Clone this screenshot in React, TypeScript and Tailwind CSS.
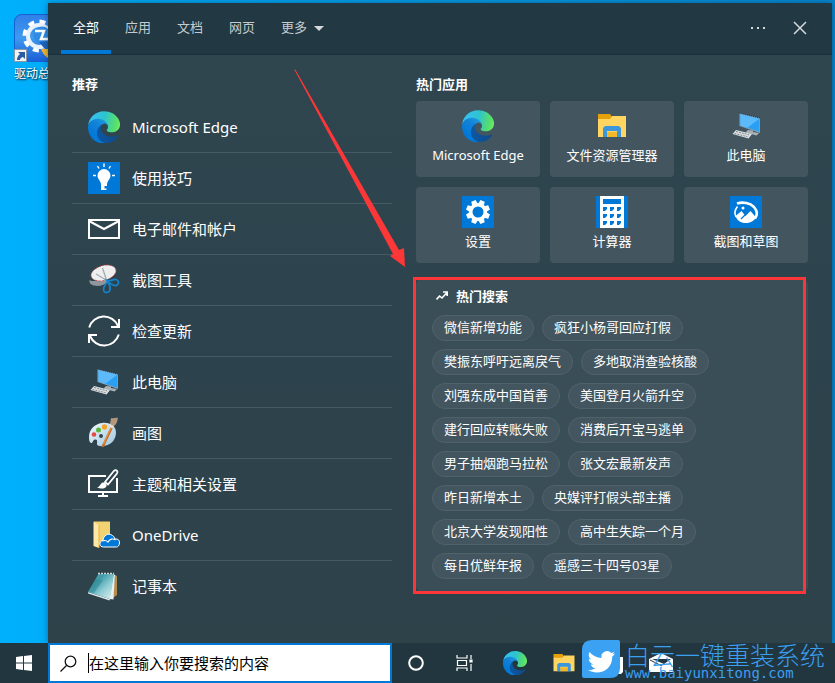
import { ReactNode } from 'react';

type IconProps = {
  className?: string;
};

type AppEntry = {
  label: string;
  icon: ReactNode;
};

function EdgeIcon({ className = 'w-8 h-8' }: IconProps) {
  return (
    <svg viewBox="0 0 256 256" className={className} aria-hidden="true">
      <defs>
        <linearGradient id="edge-a" x1="63" y1="177" x2="241" y2="177" gradientUnits="userSpaceOnUse">
          <stop offset="0" stopColor="#0c59a4" />
          <stop offset="1" stopColor="#114a8b" />
        </linearGradient>
        <linearGradient id="edge-b" x1="157" y1="92" x2="46" y2="213" gradientUnits="userSpaceOnUse">
          <stop offset="0" stopColor="#1b9de2" />
          <stop offset="0.4" stopColor="#1382d8" />
          <stop offset="1" stopColor="#0078d7" />
        </linearGradient>
        <linearGradient id="edge-c" x1="20" y1="60" x2="250" y2="110" gradientUnits="userSpaceOnUse">
          <stop offset="0" stopColor="#35c1f1" />
          <stop offset="0.45" stopColor="#2dc3cf" />
          <stop offset="0.9" stopColor="#5be063" />
          <stop offset="1" stopColor="#66eb6e" />
        </linearGradient>
      </defs>
      <path fill="url(#edge-a)" d="M235.7 195.5a93.7 93.7 0 0 1-10.6 4.7 101.9 101.9 0 0 1-35.9 6.4c-47.3 0-88.5-32.5-88.5-74.3a31.5 31.5 0 0 1 16.4-27.3c-42.8 1.8-53.8 46.4-53.8 72.5 0 74 68.1 81.4 82.8 81.4 7.9 0 19.8-2.3 27-4.6l1.3-.4a128.3 128.3 0 0 0 66.6-52.8 4 4 0 0 0-5.3-5.6Z" />
      <path fill="url(#edge-b)" d="M105.7 241.4A79.2 79.2 0 0 1 83 220.1a80.7 80.7 0 0 1 34.1-115.1c3.2-1.5 8.5-4.2 15.6-4.1a32.4 32.4 0 0 1 25.7 13 31.9 31.9 0 0 1 6.3 18.7c0-.2 24.5-79.6-80-79.6-43.9 0-84.7 41.7-84.7 78.2a130.2 130.2 0 0 0 12.1 56 128 128 0 0 0 156.4 67.1 75.5 75.5 0 0 1-62.8-12.9Z" />
      <path fill="url(#edge-c)" d="M152.3 148.9c-.8 1-3.3 2.5-3.3 5.7 0 2.6 1.7 5.1 4.8 7.3 14.4 10 41.6 8.7 41.7 8.7a59.6 59.6 0 0 0 30.3-8.3 61.4 61.4 0 0 0 30.4-52.9c.3-22.4-8-37.3-11.3-43.9C223.5 24.3 177.7 1 128 1A128 128 0 0 0 0 127.2C.5 90.7 36.8 61.2 80 61.2c3.5 0 23.5.3 42 10.1 16.3 8.6 24.9 19 30.8 29.2 6.2 10.7 7.3 24.1 7.3 29.5 0 5.3-2.7 13.3-7.8 18.9Z" />
    </svg>
  );
}

function TipsIcon() {
  return (
    <svg viewBox="0 0 32 32" className="w-8 h-8" aria-hidden="true">
      <path fill="#0078d7" d="M0 0h32v32H0z" />
      <path fill="#fff" d="M16 7a6.500 6.500 0 0 0-6.500 6.500c0 3.300 2.700 4.800 3.500 8.500v6h5.500v-1.500h-2V24H19v-2c.8-3.700 3.500-5.200 3.500-8.500A6.500 6.500 0 0 0 16 7Z" />
      <path stroke="#fff" strokeWidth="1.400" d="M16 1.500v3.500M9.500 4l1.500 2.500M22.500 4 21 6.500M5 13.500h3M24 13.500h3" />
    </svg>
  );
}

function MailOutlineIcon() {
  return (
    <svg viewBox="0 0 32 32" className="w-8 h-8" fill="none" stroke="#fff" strokeWidth="2" aria-hidden="true">
      <path d="M1 7h30v18H1z" />
      <path d="m1 8 15 8 15-8" />
    </svg>
  );
}

function SnippingIcon() {
  return (
    <svg viewBox="0 0 32 32" className="w-8 h-8" aria-hidden="true">
      <path fill="#8d979c" d="M1.500 16c3 2.500 10 0 17-1l.5 3c-3 4-9 4.500-13 3.500-3-.5-5-2.500-4.500-5.500Z" />
      <ellipse cx="15.500" cy="9" rx="12.800" ry="7.400" fill="#eeeeef" transform="rotate(-16 15.500 9)" />
      <ellipse cx="15.500" cy="9" rx="12.800" ry="7.400" fill="none" stroke="#cf4a4c" strokeWidth="0.800" strokeDasharray="2 1.500" transform="rotate(-16 15.500 9)" />
      <path stroke="#a4acb1" strokeWidth="1.300" fill="none" d="m8 10 11 6.500M14.500 4l4 12" />
      <g fill="none" stroke="#1683cd" strokeWidth="1.700">
        <path d="M19 16.500c3.500 1 6-1.500 9-1 3 .8 3.500 4 1 5.800-3 1.200-5-.8-8-2.800Z" />
        <path d="M19.500 18c-2.500 2.500-4.500 6-3.700 9 1 2.200 5 2 6-.5.800-2.500.2-5-1.300-7.500Z" />
      </g>
    </svg>
  );
}

function RefreshIcon() {
  return (
    <svg viewBox="0 0 32 32" className="w-8 h-8" fill="none" stroke="#fff" strokeWidth="2" aria-hidden="true">
      <path d="M1.200 12.500A15.300 15.300 0 0 1 30 11M30.800 19.500A15.300 15.300 0 0 1 2 21" />
      <path d="M31 4v8h-8M1 28v-8h8" />
    </svg>
  );
}

function ComputerIcon() {
  return (
    <svg viewBox="0 0 32 32" className="w-8 h-8" aria-hidden="true">
      <path fill="#7fa3ba" d="m9.500 3 20.500 5v15L9.500 16Z" />
      <path fill="#2aa0f4" d="m10.500 4.200 18.700 4.600v12.700l-18.700-6Z" />
      <path fill="#5cbafb" d="m10.500 4.200 18.700 4.600-11.700 9-7-2.300Z" />
      <path stroke="#1f2d35" strokeWidth="1" strokeDasharray="1 1" d="m9.500 3 20.500 5" />
      <path fill="#a8b1b7" d="m18 20 5 .5v1.500l6 1-2.500 2.500-11-3Z" />
      <path fill="#dcdfe1" d="m6 20 16 4-3.500 4.500L2.500 24Z" />
      <path stroke="#7f8990" strokeWidth="1" strokeDasharray="2 1" d="m6 21.500 13 3.300M4.500 23.500l13 3.200" />
    </svg>
  );
}

function PaintIcon() {
  return (
    <svg viewBox="0 0 32 32" className="w-8 h-8" aria-hidden="true">
      <defs>
        <linearGradient id="palette" x1="0" y1="0" x2="1" y2="1">
          <stop offset="0" stopColor="#f3f8fb" />
          <stop offset="1" stopColor="#9cc7e2" />
        </linearGradient>
      </defs>
      <path fill="url(#palette)" d="M14 6C6 7 1 13 1 20c0 3 .5 5.500 2 6 2 .5 1.500-3 4-3.500 3-.5 2 3 2 5 1 2 5 2 9 1 6-1.500 10-6.500 10-13S22 5 14 6Z" />
      <circle cx="6" cy="17.500" r="2.300" fill="#e54b45" />
      <circle cx="10.500" cy="13" r="2.500" fill="#5cb53b" />
      <circle cx="16.500" cy="10" r="2.700" fill="#f2a42c" />
      <circle cx="13" cy="19" r="2" fill="#314751" />
      <path stroke="#c9691e" strokeWidth="2.400" strokeLinecap="round" d="m24 10-9 19" />
      <path stroke="#ef9a44" strokeWidth="1" d="m23.500 10-8 17" />
      <path fill="#b3977c" d="M22 7 23 1c2 1 5-1 7 0-1 2 0 5-4 8Z" />
      <path fill="#dfdfdd" d="m22 7 4 2-1.500 2.500-3.500-2Z" />
    </svg>
  );
}

function ThemeIcon() {
  return (
    <svg viewBox="0 0 32 32" className="w-8 h-8" fill="none" stroke="#fff" strokeWidth="2" aria-hidden="true">
      <path d="M18 8H1v16h28V10M15 24v4M10 28h10" />
      <path d="M17 14 26 2.800c1-1 2.300-.8 3 0 .8.900.7 2-.1 2.900L20 16.500ZM17 14l3 2.500" strokeWidth="1.800" />
      <path fill="#fff" d="M9 19.200c3.500 0 3-4.200 6-4.700 2.500 0 4 2 3.500 3.700-1.500 3-6 3-9.500 1Z" stroke="none" />
    </svg>
  );
}

function OneDriveIcon() {
  return (
    <svg viewBox="0 0 32 32" className="w-8 h-8" aria-hidden="true">
      <path fill="#f3d272" d="M6 2.500h16v23H8Z" />
      <path fill="#ffe9a6" d="m5.500 2.500 5.500 4V29l-5.500-2Z" />
      <path fill="#e3b545" d="M10.500 6.500h1V29h-1Z" />
      <path fill="#0078d7" stroke="#fff" strokeWidth="1" d="M15.500 28c-4.500 0-5-5.500-.5-6.500.2-4.500 5-8.500 9.500-5 1.500.8 2 2 2.300 3.500 3.500-.5 5 1.500 4.700 4-.2 2.500-1.500 4-3 4Z" />
      <path fill="none" stroke="#fff" strokeWidth="1.100" d="M14.500 22c2-1 4-.5 5.500 1 1.500-3 5-4 7.500-2" />
    </svg>
  );
}

function NotepadIcon() {
  return (
    <svg viewBox="0 0 32 32" className="w-8 h-8" aria-hidden="true">
      <defs>
        <linearGradient id="notepad" x1="0" y1="0" x2="1" y2="1">
          <stop offset="0" stopColor="#69b7c1" />
          <stop offset="0.300" stopColor="#3b99a7" />
          <stop offset="0.600" stopColor="#8ecbd3" />
          <stop offset="1" stopColor="#e3f3f4" />
        </linearGradient>
      </defs>
      <path fill="#b58e4c" d="m27 5 2 1v19l-4 3Z" />
      <path fill="#e9eeee" d="m25.500 4 1.500 1-1.500 24.500-4-.5Z" />
      <path fill="#dbe6e8" d="m0 22 22 7-.5 1.500L0 23.500Z" />
      <path fill="url(#notepad)" d="M10.500 4h15.500l-4 25L0 22Z" />
      <path fill="#2b8391" d="m8 9 7 1L6 23l-5-1.500Z" opacity="0.500" />
      <path stroke="#d2d6d7" strokeWidth="1.600" strokeDasharray="2 1" d="M10 3.500h16" />
    </svg>
  );
}

function ExplorerIcon({ className = 'w-8 h-8' }: IconProps) {
  return (
    <svg viewBox="0 0 32 32" className={className} aria-hidden="true">
      <path fill="#e3a008" d="M2 4h12l2 3v3H2Z" />
      <path fill="#ffd460" d="M2 9h12l2-3h14v21H2Z" />
      <path fill="#f3b829" d="M11 22h10v5H11Z" />
      <path fill="#3c96dc" d="M7 27V18l2-2h14l2 2v9h-4v-6H11v6Z" />
    </svg>
  );
}

function SettingsIcon() {
  const teeth = [0, 45, 90, 135, 180, 225, 270, 315];
  return (
    <svg viewBox="0 0 32 32" className="w-8 h-8" aria-hidden="true">
      <path fill="#0078d7" d="M0 0h32v32H0z" />
      <circle cx="16" cy="16" r="7.300" fill="none" stroke="#fff" strokeWidth="3.600" />
      {teeth.map((angle) => (
        <path key={angle} fill="#fff" d="M13.700 4h4.600l.7 4h-6Z" transform={`rotate(${angle + 22.5} 16 16)`} />
      ))}
    </svg>
  );
}

function CalculatorIcon() {
  return (
    <svg viewBox="0 0 32 32" className="w-8 h-8" aria-hidden="true">
      <path fill="#0078d7" d="M0 0h32v32H0z" />
      <path fill="#fff" d="M4 0h24v32H4z" />
      <path fill="#0078d7" d="M7 3h18v5H7z" />
      {[11, 18, 25].map((y) =>
        [7, 14, 21].map((x) => <path key={`${x}-${y}`} fill="#0078d7" d={`M${x} ${y}h4v2l-2 2h-2Z`} />)
      )}
    </svg>
  );
}

function SketchIcon() {
  return (
    <svg viewBox="0 0 32 32" className="w-8 h-8" aria-hidden="true">
      <path fill="#0078d7" d="M0 0h32v32H0z" />
      <path fill="none" stroke="#fff" strokeWidth="1.600" d="M7.500 10.500c-2.500 3-3.200 7-1.500 10.500" />
      <path fill="none" stroke="#fff" strokeWidth="2.600" d="M7 7.500c6-2 13-.5 17 3.500 3.500 4 3.500 8 1 11.500" />
      <path fill="#fff" d="m5.500 20 6-5 4 5 5-5 5.500 6.500c-2.500 4-6 5.500-10.500 5.500S7 24.500 5.500 20Z" />
      <path stroke="#0078d7" strokeWidth="1.200" d="m11 23 6.500-6.500" />
      <circle cx="13" cy="12" r="1.500" fill="#fff" />
    </svg>
  );
}

const recommended: AppEntry[] = [
  { label: 'Microsoft Edge', icon: <EdgeIcon /> },
  { label: '使用技巧', icon: <TipsIcon /> },
  { label: '电子邮件和帐户', icon: <MailOutlineIcon /> },
  { label: '截图工具', icon: <SnippingIcon /> },
  { label: '检查更新', icon: <RefreshIcon /> },
  { label: '此电脑', icon: <ComputerIcon /> },
  { label: '画图', icon: <PaintIcon /> },
  { label: '主题和相关设置', icon: <ThemeIcon /> },
  { label: 'OneDrive', icon: <OneDriveIcon /> },
  { label: '记事本', icon: <NotepadIcon /> },
];

const topApps: AppEntry[] = [
  { label: 'Microsoft Edge', icon: <EdgeIcon /> },
  { label: '文件资源管理器', icon: <ExplorerIcon /> },
  { label: '此电脑', icon: <ComputerIcon /> },
  { label: '设置', icon: <SettingsIcon /> },
  { label: '计算器', icon: <CalculatorIcon /> },
  { label: '截图和草图', icon: <SketchIcon /> },
];

const hotSearches = [
  '微信新增功能', '疯狂小杨哥回应打假',
  '樊振东呼吁远离戾气', '多地取消查验核酸',
  '刘强东成中国首善', '美国登月火箭升空',
  '建行回应转账失败', '消费后开宝马逃单',
  '男子抽烟跑马拉松', '张文宏最新发声',
  '昨日新增本土', '央媒评打假头部主播',
  '北京大学发现阳性', '高中生失踪一个月',
  '每日优鲜年报', '遥感三十四号03星',
];

const tabs = ['全部', '应用', '文档', '网页'];

function DesktopShortcut() {
  return (
    <div className="w-12 shrink-0 overflow-hidden pt-[14px] pl-[14px]">
      <button className="block text-left">
        <svg viewBox="0 0 48 48" className="w-12 h-12" aria-hidden="true">
          <defs>
            <linearGradient id="shortcut" x1="0" y1="0" x2="0" y2="1">
              <stop offset="0" stopColor="#2f7fe8" />
              <stop offset="0.500" stopColor="#3f9af0" />
              <stop offset="1" stopColor="#1a5fd6" />
            </linearGradient>
          </defs>
          <rect x="0.500" y="0.500" width="47" height="47" rx="7" fill="url(#shortcut)" stroke="#1660cf" />
          <circle cx="25" cy="22" r="11" fill="none" stroke="#e9f2fb" strokeWidth="4" />
          <circle cx="25" cy="22" r="14.500" fill="none" stroke="#fff" strokeWidth="4" strokeDasharray="6 5.400" />
          <circle cx="28" cy="21" r="8.500" fill="#2f8ce2" />
          <path fill="none" stroke="#fff" strokeWidth="2.500" d="M21 17h9l-3 8h8" />
          <path fill="#1d63bd" d="m25 28 10-1v13Z" />
          <path fill="#f4b52c" d="M27 35h10v10c-5-1-8-5-10-10Z" />
          <path fill="#f2f2f2" stroke="#8b98a4" d="M.5 35.500h12v12H.5z" />
          <path fill="#2a5ba3" d="M4 38h7v7l-2-2c-2 1-3 1-3 3H3c0-3 1-4 3-6Z" />
        </svg>
        <span className="block mt-1 text-xs leading-4 text-white whitespace-nowrap [text-shadow:1px_1px_2px_#000]">驱动总</span>
      </button>
    </div>
  );
}

function PanelHeader() {
  return (
    <header className="h-[52px] pl-[13px] pr-4 flex justify-between items-stretch bg-[#223843] border-b border-[#1b303a]">
      <nav className="flex gap-[2px] items-stretch">
        {tabs.map((tab, i) => (
          <button
            key={tab}
            className={`px-3 border-b-4 text-[13px] leading-4 ${
              i === 0 ? 'text-white border-[#0078d7]' : 'text-[#c4ccd0] border-transparent'
            }`}
          >
            {tab}
          </button>
        ))}
        <button className="px-3 border-b-4 border-transparent text-[13px] leading-4 text-[#c4ccd0] flex items-center gap-[7px]">
          更多
          <svg viewBox="0 0 10 5" className="mt-1 w-[10px] h-[5px]" fill="#d3d9dc" aria-hidden="true">
            <path d="M0 0h10L5 5Z" />
          </svg>
        </button>
      </nav>
      <div className="flex items-center gap-[10px] pb-[2px]">
        <button className="w-8 h-8 flex items-center justify-center" aria-label="更多选项">
          <svg viewBox="0 0 16 2" className="w-4 h-[2px]" fill="#d3d9dc" aria-hidden="true">
            <path d="M1 0h2v2H1zM7 0h2v2H7zM13 0h2v2h-2z" />
          </svg>
        </button>
        <button className="w-8 h-8 flex items-center justify-center" aria-label="关闭">
          <svg viewBox="0 0 14 14" className="w-[14px] h-[14px]" stroke="#d3d9dc" strokeWidth="1.500" aria-hidden="true">
            <path d="m1 1 12 12M13 1 1 13" />
          </svg>
        </button>
      </div>
    </header>
  );
}

function HotSearches() {
  return (
    <section className="relative mt-4 pt-[7px] pb-[13px] pl-4 pr-6 rounded-md bg-[#3a4e57]">
      <h2 className="flex items-center gap-2 pl-1 text-[13px] leading-5 font-bold">
        <svg viewBox="0 0 12 10" className="w-3 h-[10px]" fill="none" stroke="#fff" strokeWidth="1.600" aria-hidden="true">
          <path d="m.5 8.500 3-3.500 2.500 2L11 1.500M7 1h4.200v4" />
        </svg>
        热门搜索
      </h2>
      <div className="mt-[9px] flex flex-wrap gap-2">
        {hotSearches.map((item) => (
          <button
            key={item}
            className="h-[26px] px-[11px] pb-[2px] rounded-full border border-[#50626a] bg-[#43565f] text-[13px] leading-4"
          >
            {item}
          </button>
        ))}
      </div>
      <div className="absolute -inset-y-[2px] -left-[3px] right-[2px] border-3 border-[#fd3737] pointer-events-none" />
    </section>
  );
}

function SearchPanel() {
  return (
    <main className="relative flex-1 mt-[3px] mr-[3px] flex flex-col bg-linear-to-b from-[#30464f] via-[#2d434d] to-[#2e424a] text-white shadow-[0_0_6px_rgba(0,40,80,0.5)]">
      <PanelHeader />
      <div className="flex-1 px-6 pt-[19px] pb-6 grid grid-cols-[320fr_392fr] gap-6">
        <section>
          <h2 className="text-[13px] leading-5 font-bold">推荐</h2>
          <ul className="mt-2">
            {recommended.map((item) => (
              <li key={item.label} className="border-b border-[#465a63] last:border-transparent">
                <button className="w-full h-[50px] pl-4 flex items-center gap-3 text-[15px] leading-5 text-left">
                  {item.icon}
                  {item.label}
                </button>
              </li>
            ))}
          </ul>
        </section>
        <section>
          <h2 className="text-[13px] leading-5 font-bold">热门应用</h2>
          <div className="mt-[7px] grid grid-cols-3 gap-[10px]">
            {topApps.map((item) => (
              <button
                key={item.label}
                className="h-[76px] pt-[9px] flex flex-col items-center gap-[3px] rounded-sm bg-[#43565f] text-[13px] leading-5"
              >
                {item.icon}
                <span>{item.label}</span>
              </button>
            ))}
          </div>
          <HotSearches />
        </section>
      </div>
      {/* pointer from the list to the hot searches box */}
      <svg viewBox="0 0 112 200" className="absolute left-[246px] top-[66px] w-[112px] h-[200px] pointer-events-none" aria-hidden="true">
        <path fill="#fd3737" d="m1 0 104 181 5-2 1 19-15-11 3-2L.5 1Z" />
      </svg>
    </main>
  );
}

function Taskbar() {
  return (
    <footer className="relative h-10 flex items-stretch bg-[#22363f]">
      <button className="w-12 flex items-center justify-center" aria-label="开始">
        <svg viewBox="0 0 16 16" className="w-4 h-4" fill="#fff" aria-hidden="true">
          <path d="m0 2 7-1v6.500H0ZM8 .9 16 0v7.500H8ZM0 8.500h7V15l-7-1ZM8 8.500h8V16l-8-1.100Z" />
        </svg>
      </button>
      <label className="w-[344px] flex items-center pl-[10px] border-2 border-[#0078d7] bg-white text-black">
        <svg viewBox="0 0 17 17" className="w-[17px] h-[17px]" fill="none" stroke="#111" strokeWidth="1.300" aria-hidden="true">
          <circle cx="10.500" cy="6.500" r="5.300" />
          <path d="M6.500 10.500.5 16.500" />
        </svg>
        <span className="ml-[11px] w-px h-5 bg-black" />
        <input
          type="text"
          aria-label="搜索"
          placeholder="在这里输入你要搜索的内容"
          className="flex-1 min-w-0 h-6 text-[15px] leading-6 bg-transparent outline-none placeholder:text-black"
        />
      </label>
      <button className="w-12 flex items-center justify-center" aria-label="Cortana">
        <svg viewBox="0 0 16 16" className="w-4 h-4" fill="none" stroke="#fff" strokeWidth="2" aria-hidden="true">
          <circle cx="8" cy="8" r="6.800" />
        </svg>
      </button>
      <button className="w-12 flex items-center justify-center" aria-label="任务视图">
        <svg viewBox="0 0 17 16" className="w-[17px] h-4" fill="none" stroke="#fff" strokeWidth="1.200" aria-hidden="true">
          <path d="M1 0v3h10V0M1 16v-3h10v3M1.500 5.500h9v5h-9zM15 0v4M15 9v7" />
          <path fill="#fff" d="M14 5h2v2h-2z" />
        </svg>
      </button>
      <button className="w-[54px] flex items-center justify-center" aria-label="Microsoft Edge">
        <EdgeIcon className="w-6 h-6" />
      </button>
      <button className="w-11 flex items-center justify-center" aria-label="文件资源管理器">
        <ExplorerIcon className="w-6 h-6" />
      </button>
      <button className="w-[50px] flex items-center justify-center" aria-label="Microsoft Store">
        <svg viewBox="0 0 24 24" className="w-6 h-6" fill="#fff" aria-hidden="true">
          <path d="M2 6h22v15l-2 2H2Z" />
        </svg>
      </button>
      <button className="w-[50px] flex items-center justify-center" aria-label="邮件">
        <svg viewBox="0 0 24 24" className="w-6 h-6" aria-hidden="true">
          <path fill="#fff" d="M0 8 12 2l12 6v13H0Z" />
          <path fill="#22363f" d="M3 8h19l-7 5Z" />
          <path stroke="#22363f" strokeWidth="1" d="m1 9 12 6" />
        </svg>
      </button>
      <div className="absolute right-[10px] bottom-[5px] flex items-start gap-[5px] text-[#3b9ff0] pointer-events-none">
        <svg viewBox="0 0 38 38" className="w-[38px] h-[38px]" aria-hidden="true">
          <path fill="#3ba2f3" d="M10 0h26q2 0 2 2v26q0 10-10 10H2q-2 0-2-2V10Q0 0 10 0Z" />
          <path fill="#fff" d="M33 13.500c-1 .5-1.700.7-2.600.8 1-.7 1.600-1.500 1.900-2.500-1 .6-2 1-3 1.200a5.600 5.600 0 0 0-9.700 5c-5-.2-9-2.300-12-6-1.600 2.700-.8 6 1.700 7.500-.9 0-1.700-.3-2.500-.7 0 2.700 1.900 5 4.500 5.500-.8.2-1.600.2-2.500.1.700 2.100 2.700 3.700 5 3.700-2.200 1.500-5 2.300-8 2 10 5.500 24.500 1.500 24.500-13.600 1-.7 2-1.800 2.700-3Z" />
        </svg>
        <div className="w-[200px]">
          <p className="font-['Noto_Sans_CJK_SC',sans-serif] text-[25px] leading-7 font-light whitespace-nowrap">白云一键重装系统</p>
          <p className="font-['DejaVu_Sans_Mono',monospace] text-sm leading-[10px] whitespace-nowrap">www.baiyunxitong.com</p>
        </div>
      </div>
    </footer>
  );
}

export default function App() {
  return (
    <div className="min-h-screen flex flex-col bg-linear-to-r from-[#00b0fc] to-[#0786cc] overflow-hidden font-['Noto_Sans','Noto_Sans_CJK_SC',sans-serif]">
      <div className="flex-1 flex">
        <DesktopShortcut />
        <SearchPanel />
      </div>
      <Taskbar />
    </div>
  );
}
